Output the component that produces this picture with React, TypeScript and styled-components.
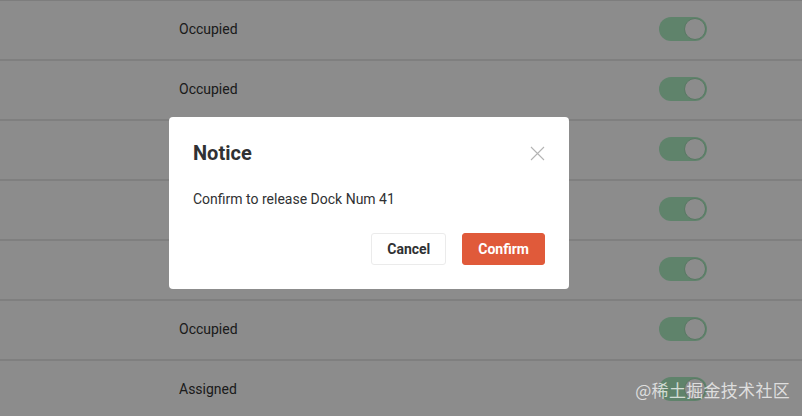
import styled, { createGlobalStyle } from 'styled-components';

const GlobalStyle = createGlobalStyle`
  html, body {
    margin: 0;
    padding: 0;
    background: #ffffff;
    font-family: Roboto, "Noto Sans", "Liberation Sans", Arial, sans-serif;
  }
`;

const Page = styled.div`
  position: relative;
  width: 802px;
  height: 416px;
  overflow: hidden;
  background: #ffffff;
`;

const Table = styled.div`
  display: flex;
  flex-direction: column;
  margin-top: -1px;
  border-top: 2px solid #e4e4e4;
`;

const Row = styled.div`
  display: grid;
  grid-template-columns: 179px 1fr 48px 95px;
  align-items: center;
  height: 58px;
  border-bottom: 2px solid #e8e8e8;
`;

const Cell = styled.div`
  font-size: 14px;
  color: #333333;
  margin-top: -2px;
`;

const Switch = styled.div<{ $on: boolean }>`
  position: relative;
  width: 48px;
  height: 24px;
  margin-top: -2px;
  border-radius: 12px;
  background: ${({ $on }) => ($on ? '#aeeec4' : '#dcdfe6')};
  box-sizing: border-box;
`;

const Knob = styled.span`
  position: absolute;
  top: 1px;
  right: 1px;
  width: 22px;
  height: 22px;
  border-radius: 50%;
  background: #ffffff;
  box-sizing: border-box;
  border: 1px solid #a0dcb4;
`;

const Mask = styled.div`
  position: absolute;
  inset: 0;
  background: rgba(0, 0, 0, 0.45);
`;

const Dialog = styled.div`
  position: absolute;
  left: 169px;
  top: 117px;
  width: 400px;
  box-sizing: border-box;
  padding: 24px;
  background: #ffffff;
  border-radius: 4px;
  display: flex;
  flex-direction: column;
`;

const Header = styled.div`
  display: flex;
  align-items: center;
  justify-content: space-between;
  height: 24px;
`;

const Title = styled.div`
  font-size: 20px;
  line-height: 24px;
  font-weight: 700;
  color: #303133;
`;

const Close = styled.button`
  border: 0;
  background: transparent;
  padding: 0;
  margin-right: 0;
  width: 16px;
  height: 16px;
  display: flex;
  align-items: center;
  justify-content: center;
  cursor: pointer;
`;

const Body = styled.div`
  margin-top: 24px;
  font-size: 14px;
  line-height: 20px;
  color: #303133;
`;

const Footer = styled.div`
  margin-top: 24px;
  display: flex;
  justify-content: flex-end;
  gap: 16px;
`;

const Button = styled.button<{ $primary?: boolean }>`
  height: 32px;
  padding: 0 15px;
  border-radius: 3px;
  font-family: inherit;
  font-size: 14px;
  font-weight: 700;
  cursor: pointer;
  border: 1px solid ${({ $primary }) => ($primary ? '#e05a3a' : '#ebebeb')};
  background: ${({ $primary }) => ($primary ? '#e05a3a' : '#ffffff')};
  color: ${({ $primary }) => ($primary ? '#ffffff' : '#303133')};
`;

const Watermark = styled.div`
  position: absolute;
  right: 12px;
  bottom: 14px;
  font-size: 17px;
  letter-spacing: 0.3px;
  color: rgba(255, 255, 255, 0.72);
  font-family: "Noto Sans CJK SC", "Noto Sans", sans-serif;
`;

const rows = ['Occupied', 'Occupied', 'Occupied', 'Occupied', 'Occupied', 'Occupied', 'Assigned'];

export default function App() {
  return (
    <>
      <GlobalStyle />
      <Page>
        <Table>
          {rows.map((status, i) => (
            <Row key={i}>
              <span />
              <Cell>{status}</Cell>
              <Switch $on>
                <Knob />
              </Switch>
              <span />
            </Row>
          ))}
        </Table>
        <Mask />
        <Dialog>
          <Header>
            <Title>Notice</Title>
            <Close aria-label="Close">
              <svg width="15" height="15" viewBox="0 0 15 15">
                <path d="M1 1 L14 14 M14 1 L1 14" stroke="#b4b4b4" strokeWidth="1.1" fill="none" />
              </svg>
            </Close>
          </Header>
          <Body>Confirm to release Dock Num 41</Body>
          <Footer>
            <Button>Cancel</Button>
            <Button $primary>Confirm</Button>
          </Footer>
        </Dialog>
        <Watermark>@稀土掘金技术社区</Watermark>
      </Page>
    </>
  );
}
